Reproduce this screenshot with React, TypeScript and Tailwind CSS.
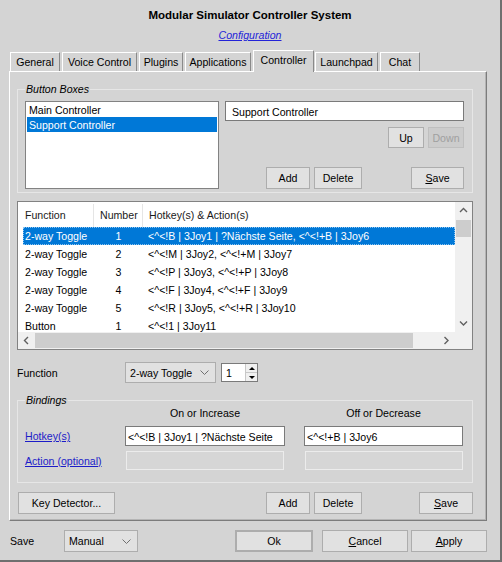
import { ReactNode } from 'react';
import clsx from 'clsx';

type BtnProps = {
  children: ReactNode;
  className?: string;
  disabled?: boolean;
  focused?: boolean;
};

function Btn({ children, className, disabled, focused }: BtnProps) {
  return (
    <button
      className={clsx(
        'flex shrink-0 items-center justify-center leading-none pt-[1px]',
        disabled
          ? 'bg-[#cccccc] border border-[#bfbfbf] text-[#a0a0a0]'
          : 'bg-[#e1e1e1] border border-[#adadad] text-black',
        focused && 'border-2 border-[#0078d7]',
        className
      )}
    >
      {children}
    </button>
  );
}

function Chevron({ dir, className }: { dir: 'up' | 'down' | 'left' | 'right'; className?: string }) {
  const pts = {
    up: '1,5 4.5,1.5 8,5',
    down: '1,1.5 4.5,5 8,1.5',
    left: '5,1 1.5,4.5 5,8',
    right: '1.5,1 5,4.5 1.5,8',
  }[dir];
  const vertical = dir === 'up' || dir === 'down';
  return (
    <svg
      width={vertical ? 9 : 7}
      height={vertical ? 7 : 9}
      viewBox={vertical ? '0 0 9 7' : '0 0 7 9'}
      className={className}
    >
      <polyline points={pts} fill="none" stroke="currentColor" strokeWidth="1.4" />
    </svg>
  );
}

function Combo({ value, className }: { value: string; className?: string }) {
  return (
    <div
      className={clsx(
        'flex shrink-0 items-center justify-between bg-[#e1e1e1] border border-[#adadad] pl-[4px] pr-[6px]',
        className
      )}
    >
      <span className="pt-[1px]">{value}</span>
      <svg width="9" height="5" viewBox="0 0 9 5" className="text-[#707070]">
        <polyline points="0.5,0.5 4.5,4.5 8.5,0.5" fill="none" stroke="currentColor" strokeWidth="1" />
      </svg>
    </div>
  );
}

function Group({ title, className, children }: { title: string; className?: string; children: ReactNode }) {
  return (
    <div className={clsx('relative border border-[#e6e6e6]', className)}>
      <span className="absolute -top-[8px] left-[7px] bg-[#d4d4d4] px-[1px] italic leading-[14px]">
        {title}
      </span>
      {children}
    </div>
  );
}

const tabs = [
  { label: 'General', w: 'w-[50px]', ml: 'ml-[10px]' },
  { label: 'Voice Control', w: 'w-[75px]', ml: 'ml-[2px]' },
  { label: 'Plugins', w: 'w-[44px]', ml: 'ml-[2px]' },
  { label: 'Applications', w: 'w-[66px]', ml: 'ml-[2px]' },
  { label: 'Controller', w: 'w-[61px]', ml: 'ml-[2px]', active: true },
  { label: 'Launchpad', w: 'w-[63px]', ml: 'ml-[1px]' },
  { label: 'Chat', w: 'w-[40px]', ml: 'ml-[2px]' },
];

const rows = [
  ['2-way Toggle', '1', '<^<!B | 3Joy1 | ?Nächste Seite, <^<!+B | 3Joy6'],
  ['2-way Toggle', '2', '<^<!M | 3Joy2, <^<!+M | 3Joy7'],
  ['2-way Toggle', '3', '<^<!P | 3Joy3, <^<!+P | 3Joy8'],
  ['2-way Toggle', '4', '<^<!F | 3Joy4, <^<!+F | 3Joy9'],
  ['2-way Toggle', '5', '<^<!R | 3Joy5, <^<!+R | 3Joy10'],
  ['Button', '1', '<^<!1 | 3Joy11'],
];

export default function App() {
  return (
    <div className="w-[502px] h-[562px] overflow-hidden bg-[#d4d4d4] border-r-2 border-b-2 border-[#6f6f6f] font-['Liberation_Sans',Arial,sans-serif] text-[10.6px] text-black leading-none">
      {/* title */}
      <div className="mt-[7px] h-[16px] text-center text-[11.5px] font-bold leading-[16px]">
        Modular Simulator Controller System
      </div>
      <div className="mt-[5px] h-[14px] text-center leading-[14px]">
        <span className="italic underline text-[#2323d8]">Configuration</span>
      </div>

      {/* tabs */}
      <div className="mt-[8px] flex h-[21px] items-end">
        {tabs.map((t) => (
          <div
            key={t.label}
            className={clsx(
              'relative flex items-center justify-center border-t border-l border-white border-r border-r-[#8a8a8a]',
              t.w,
              t.ml,
              t.active ? 'z-10 -mb-[1px] h-[22px] bg-[#d4d4d4] pb-[2px]' : 'h-[19px] pt-[1px]'
            )}
          >
            {t.label}
          </div>
        ))}
      </div>

      {/* tab panel */}
      <div className="ml-[9px] w-[478px] h-[450px] border-t border-l border-white border-r border-b border-r-[#7c7c7c] border-b-[#7c7c7c] shadow-[inset_-1px_-1px_0_#b4b4b4]">
        <Group title="Button Boxes" className="mt-[17px] ml-[7px] w-[456px]">
          <div className="flex pt-[11px] pl-[7px] pb-[3px]">
            <div className="w-[194px] h-[88px] shrink-0 bg-white border border-[#828282] px-[1px]">
              <div className="h-[15px] pl-[2px] pt-[1px] leading-[15px]">Main Controller</div>
              <div className="h-[15px] pl-[2px] pt-[1px] leading-[15px] bg-[#0078d7] text-white">Support Controller</div>
            </div>
            <div className="ml-[6px] flex w-[239px] flex-col">
              <div className="h-[20px] bg-white border border-[#7a7a7a] pl-[6px] pt-[1px] leading-[18px]">
                Support Controller
              </div>
              <div className="mt-[6px] flex justify-end gap-[4px]">
                <Btn className="w-[36px] h-[21px]">Up</Btn>
                <Btn className="w-[36px] h-[21px]" disabled>
                  Down
                </Btn>
              </div>
              <div className="mt-[19px] flex">
                <Btn className="ml-[41px] w-[44px] h-[22px]">Add</Btn>
                <Btn className="ml-[4px] w-[48px] h-[22px]">Delete</Btn>
                <Btn className="ml-auto w-[53px] h-[22px]">
                  <span className="underline">S</span>ave
                </Btn>
              </div>
            </div>
          </div>
        </Group>

        {/* list view */}
        <div className="mt-[8px] ml-[7px] w-[456px] h-[149px] border border-[#828282] bg-white flex flex-col">
          <div className="flex h-[130px]">
            <div className="w-[437px] overflow-hidden">
              <div className="flex h-[25px] items-center pt-[2px] text-[#1a1a1a]">
                <div className="w-[75px] pl-[7px]">Function</div>
                <div className="h-full w-px bg-[#e5e5e5]" />
                <div className="w-[48px] pl-[6px]">Number</div>
                <div className="h-full w-px bg-[#e5e5e5]" />
                <div className="pl-[6px]">Hotkey(s) &amp; Action(s)</div>
              </div>
              {rows.map((r, i) => (
                <div
                  key={i}
                  className={clsx(
                    'ml-[5px] flex h-[18px] items-center pt-[1px] whitespace-nowrap',
                    i === 0 && 'bg-[#0078d7] text-white outline-1 outline-dotted outline-[#8cc4f0] -outline-offset-1'
                  )}
                >
                  <div className="w-[71px] pl-[2px]">{r[0]}</div>
                  <div className="w-[49px] text-center">{r[1]}</div>
                  <div className="pl-[5px]">{r[2]}</div>
                </div>
              ))}
            </div>
            <div className="flex w-[17px] flex-col bg-[#f0f0f0] text-[#606060]">
              <div className="flex h-[17px] items-center justify-center">
                <Chevron dir="up" />
              </div>
              <div className="mx-[1px] mt-[1px] h-[17px] bg-[#cdcdcd]" />
              <div className="mt-auto flex h-[17px] items-center justify-center">
                <Chevron dir="down" />
              </div>
            </div>
          </div>
          <div className="flex h-[17px] bg-[#f0f0f0] text-[#606060]">
            <div className="flex w-[17px] items-center justify-center">
              <Chevron dir="left" />
            </div>
            <div className="my-[1px] w-[378px] bg-[#cdcdcd]" />
            <div className="ml-auto flex w-[17px] items-center justify-center">
              <Chevron dir="right" />
            </div>
            <div className="w-[17px]" />
          </div>
        </div>

        {/* function row */}
        <div className="mt-[12px] flex h-[21px] items-center">
          <div className="ml-[7px] w-[108px] pt-[1px]">Function</div>
          <Combo value="2-way Toggle" className="w-[91px] h-[21px]" />
          <div className="ml-[5px] flex h-[19px] w-[37px] bg-white border border-[#7a7a7a]">
            <div className="flex-1 pl-[4px] pt-[1px] leading-[17px]">1</div>
            <div className="flex w-[12px] flex-col border-l border-[#c8c8c8] bg-[#f0f0f0]">
              <div className="flex flex-1 items-center justify-center border-b border-[#c8c8c8]">
                <div className="w-0 h-0 border-l-[3px] border-r-[3px] border-b-[3px] border-l-transparent border-r-transparent border-b-black" />
              </div>
              <div className="flex flex-1 items-center justify-center">
                <div className="w-0 h-0 border-l-[3px] border-r-[3px] border-t-[3px] border-l-transparent border-r-transparent border-t-black" />
              </div>
            </div>
          </div>
        </div>

        {/* bindings */}
        <Group title="Bindings" className="mt-[17px] ml-[7px] w-[456px]">
          <div className="pt-[5px] pb-[12px]">
            <div className="flex h-[14px] items-center">
              <div className="ml-[107px] w-[160px] text-center">On or Increase</div>
              <div className="ml-[19px] w-[159px] text-center">Off or Decrease</div>
            </div>
            <div className="mt-[6px] flex h-[20px] items-center">
              <div className="w-[107px] pl-[7px] pt-[1px]">
                <span className="underline text-[#1c1cc8]">Hotkey(s)</span>
              </div>
              <div className="h-[20px] w-[160px] bg-white border border-[#7a7a7a] pl-[2px] pt-[1px] leading-[18px] whitespace-nowrap overflow-hidden">
                &lt;^&lt;!B | 3Joy1 | ?Nächste Seite
              </div>
              <div className="ml-[19px] h-[20px] w-[159px] bg-white border border-[#7a7a7a] pl-[2px] pt-[1px] leading-[18px]">
                &lt;^&lt;!+B | 3Joy6
              </div>
            </div>
            <div className="mt-[5px] flex h-[19px] items-center">
              <div className="w-[108px] pl-[7px] pt-[1px]">
                <span className="underline text-[#1c1cc8]">Action (optional)</span>
              </div>
              <div className="h-[19px] w-[158px] border border-[#ececec] bg-[#d6d6d6]" />
              <div className="ml-[21px] h-[19px] w-[158px] border border-[#ececec] bg-[#d6d6d6]" />
            </div>
          </div>
        </Group>

        {/* panel buttons */}
        <div className="mt-[9px] flex w-[463px]">
          <Btn className="ml-[8px] w-[97px] h-[22px]">Key Detector...</Btn>
          <Btn className="ml-[151px] w-[44px] h-[22px]">Add</Btn>
          <Btn className="ml-[4px] w-[48px] h-[22px]">Delete</Btn>
          <Btn className="ml-auto w-[54px] h-[22px]">
            <span className="underline">S</span>ave
          </Btn>
        </div>
      </div>

      {/* bottom bar */}
      <div className="mt-[9px] flex h-[22px] items-center">
        <div className="ml-[10px] w-[54px] pt-[1px]">Save</div>
        <Combo value="Manual" className="w-[74px] h-[22px]" />
        <Btn className="ml-[97px] w-[78px] h-[22px]" focused>
          Ok
        </Btn>
        <Btn className="ml-[9px] w-[86px] h-[22px]">
          <span className="underline">C</span>ancel
        </Btn>
        <Btn className="ml-[3px] w-[76px] h-[22px]">
          <span className="underline">A</span>pply
        </Btn>
      </div>
    </div>
  );
}
